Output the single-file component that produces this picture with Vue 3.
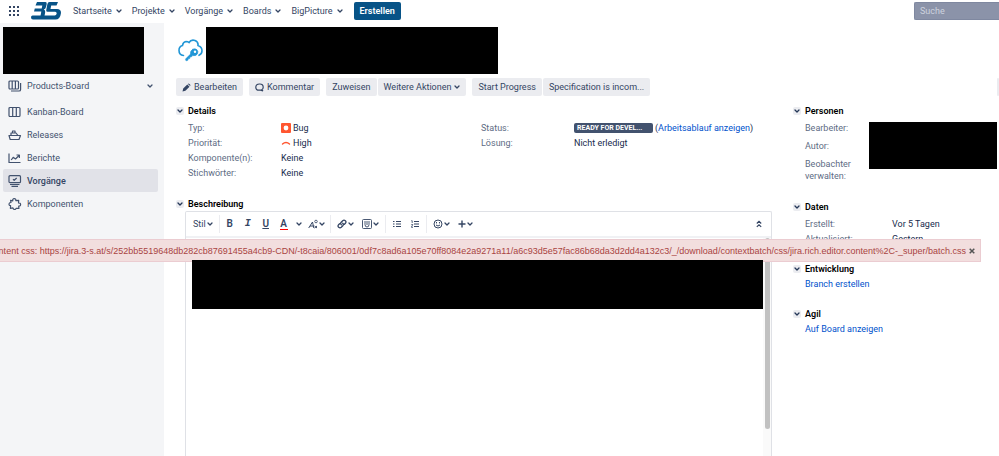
<script setup>
import { h, ref } from 'vue'

const menus = ['Startseite', 'Projekte', 'Vorgänge', 'Boards', 'BigPicture']
const links = [
  { label: 'Kanban-Board', icon: 'board' },
  { label: 'Releases', icon: 'ship' },
  { label: 'Berichte', icon: 'chart' },
  { label: 'Vorgänge', icon: 'screen', active: true },
  { label: 'Komponenten', icon: 'puzzle' },
]
const query = ref('')
const bannerOpen = ref(true)
const message =
  'Failed to load content css: https://jira.3-s.at/s/252bb5519648db282cb87691455a4cb9-CDN/-t8caia/806001/0df7c8ad6a105e70ff8084e2a9271a11/a6c93d5e57fac86b68da3d2dd4a132c3/_/download/contextbatch/css/jira.rich.editor.content%2C-_super/batch.css'

const Chevron = () =>
  h('svg', { viewBox: '0 0 6 6', width: 6, height: 6, class: 'chev', 'aria-hidden': 'true' }, [
    h('path', { d: 'M1 2l2 2 2-2', fill: 'none', stroke: 'currentColor', 'stroke-width': 1.3, 'stroke-linecap': 'round', 'stroke-linejoin': 'round' }),
  ])
</script>

<template>
  <div class="page">
    <header class="top">
      <button class="apps" aria-label="Anwendungen">
        <svg viewBox="0 0 10 10" width="10" height="10" fill="#344563">
          <template v-for="r in 3" :key="r">
            <rect v-for="c in 3" :key="c" :x="(c - 1) * 4" :y="(r - 1) * 4" width="2" height="2" />
          </template>
        </svg>
      </button>
      <a href="#" class="logo" aria-label="Startseite">
        <svg viewBox="0 0 30 18" width="30" height="18" fill="#075387">
          <path d="M6 0h8.500q1.500 0 1.200 2L15 5q-.5 2-2.200 2.500 1.700.5 1.400 2.500L13.500 14h-4l.8-4.500H3L3.800 6.500h6.900l.6-3H4.500z" />
          <path d="M18.500 0H27l-1.500 3.500h-5.300L19.500 7H26q4.500 0 3.900 4.500-.8 6-5.400 6H2Q0 17.500 0 15.300T2.200 13.500h21.500q1.600 0 1.900-1.800t-1.400-1.900H16.500q-1.600 0-1.200-2l1-5.300Q16.800 0 18.500 0z" />
        </svg>
      </a>
      <nav class="menus">
        <button v-for="m in menus" :key="m" class="menu">{{ m }}<Chevron /></button>
      </nav>
      <button class="create">Erstellen</button>
      <input v-model="query" class="search" type="search" placeholder="Suche" aria-label="Suche" />
    </header>

    <div class="body">
      <aside class="side">
        <div class="mask side-mask"></div>
        <button class="side-item project">
          <svg class="ico" viewBox="0 0 14 12" width="14" height="12">
            <rect x="1" y="1" width="9.500" height="8" rx="1" />
            <path d="M4.200 1v8M7.400 1v8M3 11h8q1.600 0 1.600-1.600V3" />
          </svg>
          <span>Products-Board</span><Chevron />
        </button>
        <nav class="side-nav">
          <a v-for="l in links" :key="l.label" href="#" class="side-item" :class="{ active: l.active }">
            <svg class="ico" viewBox="0 0 14 12" width="14" height="12">
              <g v-if="l.icon === 'board'"><rect x="1" y="1.500" width="11" height="9" rx="1" /><path d="M4.700 1.500v9M8.300 1.500v9" /></g>
              <g v-else-if="l.icon === 'ship'"><path d="M1 6.500h11.500l-1.500 4H2.200zM3 6.500V4h5l2 2.500M4.500 4V2H7v2" /></g>
              <g v-else-if="l.icon === 'chart'"><path d="M1 1.500v9h11.500M3.200 8l2-2.700L7.500 7 11 3.500M8.500 3H11.400v3" /></g>
              <g v-else-if="l.icon === 'screen'"><rect x="1" y=".7" width="11.500" height="7" rx="1" /><path d="M2 9.500h9.500M3.500 11.400h6.500M5 4.200l1.200 1.100L8.700 3" /></g>
              <g v-else><path d="M4.800 2.800Q4.300.7 6.200.7t1.600 1.900l2.900-.3-.2 2.700q2.100-.1 2.100 1.500t-1.900 1.500l.2 2.400-2.800-.1q-.1 1.200-1.500 1.200t-1.700-1.600l-2.500.5.200-2.700Q.9 7.400 1 6t2-1.500l-.4-2.200z" /></g>
            </svg>
            <span>{{ l.label }}</span>
          </a>
        </nav>
      </aside>

      <main class="main">
        <div class="title">
          <svg viewBox="0 0 26 24" width="26" height="24" fill="none" stroke="#2196d6" stroke-width="1.600" stroke-linecap="round">
            <path d="M6.500 16.500Q2 16 2 11.200 2 7.500 5.500 6.500 6 3 9 2.500q2 0 3 1 2-3.300 6-2.100 3.500 1.300 3 5.100 4 1.500 4 5.300 0 3.200-3 4.500" />
            <path d="M15.800 10.200q2.500-1.200 4.200.6t.4 4.100q-1.600 2.400-4.700 1.700l-1.200 1.200-1.600.2-.2 1.600-1.500.2-.4 1.500-1.800.5-.5-1.700 5-5q-.6-3.200 2.300-4.900z" fill="#2196d6" stroke-width=".6" />
            <circle cx="18" cy="12.800" r="1.200" fill="#fff" stroke="none" />
          </svg>
          <div class="mask title-mask"></div>
        </div>

        <div class="actions">
          <button class="btn">
            <svg viewBox="0 0 9 9" width="9" height="9" fill="currentColor"><path d="M.5 8.500l.7-2.900L5.300 1.500l2.200 2.200-4.100 4.100zM5.900.9q.8-.7 1.500 0l.7.700q.700.700 0 1.500z" /></svg>Bearbeiten
          </button>
          <button class="btn">
            <svg viewBox="0 0 9 9" width="9" height="9" fill="none" stroke="currentColor" stroke-width="1.200"><path d="M5.500 7.200H4Q.8 7.200.8 4.200T4.500 1t3.700 3.200Q8.200 6 6.800 6.800L8 8z" /></svg>Kommentar
          </button>
          <div class="group"><button class="btn">Zuweisen</button><button class="btn">Weitere Aktionen<Chevron /></button></div>
          <div class="group"><button class="btn">Start Progress</button><button class="btn">Specification is incom...</button></div>
          <button class="btn more" aria-label="Mehr"></button>
        </div>

        <div class="columns">
          <div class="left">
            <section>
              <h2><button class="toggle" aria-label="Details umschalten"><Chevron /></button>Details</h2>
              <div class="details">
                <dl>
                  <dt>Typ:</dt>
                  <dd><svg viewBox="0 0 10 10" width="10" height="10"><rect width="10" height="10" rx="1" fill="#ff5630" /><circle cx="5" cy="5" r="2.400" fill="#fff" /></svg>Bug</dd>
                  <dt>Priorität:</dt>
                  <dd><svg viewBox="0 0 10 10" width="10" height="10"><path d="M1.500 6Q5 2.800 8.500 6" fill="none" stroke="#ff5630" stroke-width="1.400" stroke-linecap="round" /></svg>High</dd>
                  <dt>Komponente(n):</dt><dd>Keine</dd>
                  <dt>Stichwörter:</dt><dd>Keine</dd>
                </dl>
                <dl>
                  <dt>Status:</dt>
                  <dd><span class="lozenge">READY FOR DEVEL...</span><span>(<a href="#">Arbeitsablauf anzeigen</a>)</span></dd>
                  <dt>Lösung:</dt><dd>Nicht erledigt</dd>
                </dl>
              </div>
            </section>

            <section class="description">
              <h2><button class="toggle" aria-label="Beschreibung umschalten"><Chevron /></button>Beschreibung</h2>
              <div class="editor">
                <div class="tools" role="toolbar">
                  <div class="tool-group"><button class="tool">Stil<Chevron /></button></div>
                  <div class="tool-group format">
                    <button class="tool"><b>B</b></button>
                    <button class="tool"><i class="italic">I</i></button>
                    <button class="tool"><u>U</u></button>
                    <button class="tool"><span class="colour">A</span></button>
                    <button class="tool" aria-label="Farbe wählen"><Chevron /></button>
                    <button class="tool" aria-label="Weitere Formate">
                      <svg viewBox="0 0 10 10" width="10" height="10" fill="none" stroke="currentColor"><path d="M.7 9l3.800-6 1.300 6M2 7h3.500M6.500 7l2.500 2M9 7L6.500 9" /><circle cx="8" cy="2.500" r="1.300" stroke-width=".8" /></svg><Chevron />
                    </button>
                  </div>
                  <div class="tool-group">
                    <button class="tool" aria-label="Link">
                      <svg viewBox="0 0 10 10" width="10" height="10" fill="none" stroke="currentColor" stroke-width="1.300" stroke-linecap="round"><path d="M4.300 5.700Q3 4.500 4.200 3.200l1.500-1.500Q7 .6 8.300 1.700t.1 2.600l-1 1M5.700 4.300Q7 5.500 5.800 6.800L4.300 8.300Q3 9.400 1.700 8.300t-.1-2.600l1-1" /></svg><Chevron />
                    </button>
                    <button class="tool" aria-label="Anhang">
                      <svg viewBox="0 0 10 10" width="10" height="10" fill="none" stroke="currentColor" stroke-width=".9"><rect x=".5" y=".5" width="9" height="9" rx="1" /><path d="M3 2v3.500Q3 8 5 8t2-2.500V2M5 2v4" /></svg><Chevron />
                    </button>
                  </div>
                  <div class="tool-group lists">
                    <button class="tool" aria-label="Liste">
                      <svg viewBox="0 0 8 8" width="8" height="8" fill="none" stroke="currentColor" stroke-width="1.200"><path d="M0 1.500h1.500M0 4h1.500M0 6.500h1.500M3 1.500h5M3 4h5M3 6.500h5" /></svg>
                    </button>
                    <button class="tool" aria-label="Nummerierte Liste">
                      <svg viewBox="0 0 8 8" width="8" height="8" fill="none" stroke="currentColor"><path d="M.3.700H1.200V3M.3 4.500h1.500L.3 7.300h1.700" stroke-width=".8" /><path d="M3 1.500h5M3 4h5M3 6.500h5" stroke-width="1.200" /></svg>
                    </button>
                  </div>
                  <div class="tool-group last">
                    <button class="tool" aria-label="Emoji">
                      <svg viewBox="0 0 10 10" width="10" height="10" fill="none" stroke="currentColor"><circle cx="5" cy="5" r="4" /><path d="M3 6q2 2 4 0M3.500 3v1.400M6.500 3v1.400" /></svg><Chevron />
                    </button>
                    <button class="tool" aria-label="Einfügen">
                      <svg viewBox="0 0 8 8" width="8" height="8" fill="none" stroke="currentColor" stroke-width="1.400"><path d="M4 .5v7M.5 4h7" /></svg><Chevron />
                    </button>
                  </div>
                  <button class="tool collapse" aria-label="Einklappen">
                    <svg viewBox="0 0 6 8" width="6" height="8" fill="none" stroke="currentColor" stroke-width="1.200"><path d="M.8 3.500L3 1.400l2.200 2.100M.8 6.900L3 4.800l2.200 2.100" /></svg>
                  </button>
                </div>
                <div class="canvas">
                  <div class="text"><div class="mask text-mask"></div></div>
                  <div class="track"><div class="thumb"></div></div>
                </div>
              </div>
            </section>
          </div>

          <div class="right">
            <section class="people">
              <h2><button class="toggle" aria-label="Personen umschalten"><Chevron /></button>Personen</h2>
              <div class="people-body">
                <ul>
                  <li>Bearbeiter:</li>
                  <li>Autor:</li>
                  <li>Beobachter verwalten:</li>
                </ul>
                <div class="mask people-mask"></div>
              </div>
            </section>
            <section class="dates">
              <h2><button class="toggle" aria-label="Daten umschalten"><Chevron /></button>Daten</h2>
              <dl>
                <dt>Erstellt:</dt><dd>Vor 5 Tagen</dd>
                <dt>Aktualisiert:</dt><dd>Gestern</dd>
              </dl>
            </section>
            <section class="short">
              <h2><button class="toggle" aria-label="Entwicklung umschalten"><Chevron /></button>Entwicklung</h2>
              <a href="#">Branch erstellen</a>
            </section>
            <section class="short">
              <h2><button class="toggle" aria-label="Agil umschalten"><Chevron /></button>Agil</h2>
              <a href="#">Auf Board anzeigen</a>
            </section>
          </div>
        </div>
      </main>
    </div>

    <div v-if="bannerOpen" class="banner" role="alert">
      <span>{{ message }}</span>
      <button class="close" aria-label="Schließen" @click="bannerOpen = false">
        <svg viewBox="0 0 6 6" width="6" height="6" stroke="#555" stroke-width="1.500"><path d="M.7.700l4.600 4.600M5.300.700L.7 5.300" /></svg>
      </button>
    </div>
  </div>
</template>

<style>
body {
  margin: 0;
  overflow: hidden;
}
</style>

<style scoped>
.page {
  position: relative;
  display: flex;
  flex-direction: column;
  min-height: 100vh;
  overflow: hidden;
  background: #fff;
  color: #172b4d;
  font: 9px/16px Roboto, 'Liberation Sans', sans-serif;
}
.page * {
  box-sizing: border-box;
}
svg {
  flex: none;
  display: block;
}
button {
  display: flex;
  align-items: center;
  padding: 0;
  border: 0;
  background: none;
  color: inherit;
  font: inherit;
  white-space: nowrap;
  cursor: pointer;
}
a {
  color: #0052cc;
  text-decoration: none;
}
.mask {
  background: #000;
}

.top {
  display: flex;
  align-items: center;
  height: 23px;
  padding: 0 0 2px 9px;
}
.logo {
  align-self: flex-start;
  margin: 2px 12px 0;
}
.menus {
  display: flex;
  gap: 10px;
}
.menu {
  gap: 4px;
  height: 18px;
  color: #344563;
}
.create {
  height: 18px;
  margin: 0 auto 0 11px;
  padding: 0 6px;
  border-radius: 2px;
  background: #075387;
  color: #fff;
  font-weight: 600;
}
.search {
  width: 85px;
  height: 18px;
  padding: 0 5px;
  border: 1px solid #7f88a0;
  border-right: 0;
  border-radius: 2px 0 0 2px;
  outline: 0;
  background: #8b93a9;
  color: #fff;
  font: inherit;
}
.search::placeholder {
  color: #cdd2de;
  opacity: 1;
}

.body {
  display: flex;
  flex: 1;
}
.side {
  flex: none;
  width: 164px;
  padding: 4px 6px 0 3px;
  background: #f4f5f7;
}
.side-mask {
  width: 141px;
  height: 47px;
}
.side-item {
  display: flex;
  align-items: center;
  gap: 5px;
  width: 100%;
  height: 23px;
  padding: 0 5px;
  border-radius: 2px;
  color: #42526e;
  text-align: left;
}
.side-item span {
  flex: 1;
}
.project {
  margin-bottom: 3px;
}
.active {
  background: #e1e2e8;
  color: #344563;
  font-weight: 500;
}
.ico {
  fill: none;
  stroke: #42526e;
  stroke-width: 1.2;
  stroke-linejoin: round;
}

.main {
  display: flex;
  flex: 1;
  flex-direction: column;
  min-width: 0;
  padding: 4px 0 0 12px;
}
.title {
  display: flex;
  align-items: center;
  gap: 3px;
  padding-left: 1px;
}
.title-mask {
  width: 292px;
  height: 47px;
}
.actions {
  display: flex;
  gap: 6px;
  margin-top: 4px;
}
.group {
  display: flex;
  gap: 1px;
}
.btn {
  gap: 3px;
  height: 18px;
  padding: 0 6px;
  border-radius: 2px;
  background: #ebecf0;
  color: #344563;
}
.more {
  width: 2px;
  margin-left: auto;
  padding: 0;
}

.columns {
  display: grid;
  flex: 1;
  grid-template-columns: minmax(0, 1fr) 206px;
  gap: 21px;
  padding-top: 7px;
}
.left {
  display: flex;
  flex-direction: column;
}
h2 {
  display: flex;
  align-items: center;
  gap: 4px;
  height: 15px;
  margin: 0;
  color: #000;
  font-size: 9px;
  font-weight: 600;
}
.toggle {
  justify-content: center;
  width: 8px;
  height: 8px;
  border-radius: 2px;
  background: #ebecf0;
  color: #253858;
}
.details {
  display: grid;
  grid-template-columns: 1fr 1fr;
  column-gap: 2px;
  padding: 2px 0 0 12px;
}
dl {
  display: grid;
  grid-template-columns: 93px 1fr;
  align-content: start;
  margin: 0;
}
dt {
  height: 15px;
  color: #5e6c84;
}
dd {
  display: flex;
  align-items: center;
  gap: 2px;
  height: 15px;
  margin: 0;
  white-space: nowrap;
}
.lozenge {
  width: 79px;
  height: 10px;
  padding: 0 3px;
  border-radius: 2px;
  background: #42526e;
  color: #fff;
  font-size: 7px;
  font-weight: 700;
  line-height: 10px;
}
.description {
  display: flex;
  flex: 1;
  flex-direction: column;
  margin-top: 16px;
}
.editor {
  display: flex;
  flex: 1;
  flex-direction: column;
  margin-left: 9px;
  border: 1px solid #dfe1e6;
  border-bottom: 0;
  border-radius: 2px 2px 0 0;
}
.tools {
  display: flex;
  align-items: center;
  height: 26px;
  padding-left: 1px;
  border-bottom: 2px solid #f0f1f4;
}
.tool-group {
  display: flex;
  align-items: center;
  gap: 8px;
  height: 18px;
  padding: 0 6px;
  border-right: 1px solid #ebecf0;
}
.last {
  border-right: 0;
}
.tool {
  justify-content: center;
  gap: 1px;
  height: 18px;
  color: #344563;
}
.format {
  gap: 6px;
  padding: 0 5px 0 4px;
}
.format .tool {
  min-width: 12px;
}
.format b,
.format i,
.format u,
.colour {
  font-size: 10px;
  font-weight: 600;
}
.format .tool:nth-child(5) {
  min-width: 6px;
}
.italic {
  font-family: 'Liberation Mono', monospace;
}
.colour {
  width: 8px;
  height: 12px;
  border-bottom: 1px solid #f00;
  line-height: 12px;
}
.lists {
  gap: 10px;
  padding: 0 7px;
}
.collapse {
  margin: 0 9px 0 auto;
}
.canvas {
  display: flex;
  flex: 1;
}
.text {
  flex: 1;
  padding: 22px 0 0 6px;
}
.text-mask {
  position: relative;
  z-index: 2;
  height: 49px;
}
.track {
  flex: none;
  width: 8px;
  padding: 0 1px 0 2px;
  background: #fafafa;
}
.thumb {
  height: 191px;
  border-radius: 3px;
  background: #c1c1c1;
}

.people-body {
  display: flex;
  justify-content: space-between;
  padding: 4px 2px 0 12px;
}
ul {
  width: 56px;
  margin: 0;
  padding: 0;
  list-style: none;
  color: #5e6c84;
  line-height: 12px;
}
li {
  margin-bottom: 6px;
}
.people-mask {
  width: 128px;
  height: 47px;
}
.dates {
  margin-top: 11px;
}
.dates dl {
  grid-template-columns: 87px 1fr;
  padding: 2px 0 0 12px;
}
.short {
  margin-top: 15px;
}
.short a {
  display: block;
  height: 15px;
  margin-left: 12px;
}

.banner {
  position: absolute;
  top: 239px;
  right: 18px;
  z-index: 1;
  display: flex;
  align-items: center;
  gap: 3px;
  height: 23px;
  padding: 0 5px;
  border: 1px solid #ebccd1;
  background: #f2dede;
  color: #a94442;
  font-family: 'Liberation Sans', sans-serif;
  white-space: nowrap;
}
</style>
